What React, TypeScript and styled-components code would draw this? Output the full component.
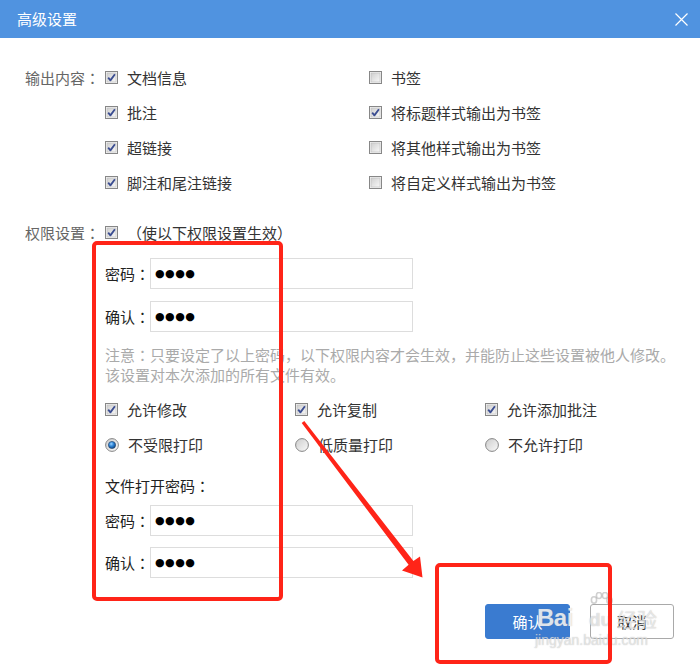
import styled, { createGlobalStyle } from 'styled-components';

const GlobalStyle = createGlobalStyle`
  html, body {
    margin: 0;
    padding: 0;
    background: #ffffff;
  }
  body {
    font-family: "Noto Sans CJK SC", "Noto Sans", sans-serif;
  }
`;

const Page = styled.div`
  position: relative;
  width: 700px;
  height: 666px;
  overflow: hidden;
  background: #ffffff;
  font-size: 15px;
  color: #333333;
`;

const Header = styled.div`
  height: 38px;
  background: #5093e0;
  display: flex;
  align-items: center;
  justify-content: space-between;
  padding: 0 12px 0 17px;
  box-sizing: border-box;
`;

const Title = styled.div`
  color: #ffffff;
  font-size: 15px;
  line-height: 20px;
`;

const CloseButton = styled.button`
  border: none;
  background: transparent;
  padding: 0;
  width: 13px;
  height: 13px;
  display: flex;
  cursor: pointer;
`;

const Body = styled.div`
  padding: 22px 0 0 25px;
`;

const Colon = styled.span`
  font-family: "Noto Sans CJK TC", "Noto Sans CJK SC", sans-serif;
`;

const OutputGrid = styled.div`
  display: grid;
  grid-template-columns: 80px 264px 1fr;
  grid-auto-rows: 35px;
  align-items: center;
`;

const SectionLabel = styled.div`
  color: #666666;
  line-height: 20px;
  white-space: nowrap;
`;

const Option = styled.label`
  display: flex;
  align-items: center;
  gap: 9px;
  line-height: 20px;
  white-space: nowrap;
  color: #333333;
`;

const PermRow = styled.div`
  margin-top: 15px;
  height: 35px;
  display: flex;
  align-items: center;
  & > ${SectionLabel} {
    width: 80px;
  }
`;

const PermBody = styled.div`
  padding-left: 80px;
  margin-top: 8px;
`;

const FieldRow = styled.div<{ $gap?: number }>`
  display: flex;
  align-items: center;
  height: 31px;
  margin-top: ${p => p.$gap ?? 0}px;
`;

const FieldLabel = styled.span`
  width: 45px;
  color: #222222;
  line-height: 20px;
  white-space: nowrap;
`;

const PwdInput = styled.input`
  width: 263px;
  height: 31px;
  box-sizing: border-box;
  border: 1px solid #dddddd;
  padding: 0 0 0 4px;
  font-family: "DejaVu Sans", sans-serif;
  font-size: 11px;
  letter-spacing: 0.5px;
  color: #000000;
  outline: none;
  background: #ffffff;
`;

const Note = styled.div`
  margin-top: 13px;
  color: #aaaaaa;
  line-height: 20px;
  white-space: nowrap;
`;

const OptionsGrid = styled.div`
  margin-top: 7px;
  display: grid;
  grid-template-columns: 190px 190px 1fr;
  grid-auto-rows: 35px;
  align-items: center;
`;

const SubTitle = styled.div`
  margin-top: 14px;
  line-height: 20px;
  color: #222222;
`;

const Footer = styled.div`
  margin-top: 26px;
  display: flex;
  justify-content: flex-end;
  gap: 20px;
  padding-right: 26px;
`;

const DialogButton = styled.button<{ $primary?: boolean }>`
  width: ${p => (p.$primary ? 85 : 84)}px;
  height: 35px;
  border-radius: 3px;
  font-family: inherit;
  font-size: 15px;
  cursor: pointer;
  border: 1px solid ${p => (p.$primary ? '#3a7bd0' : '#a9a9a9')};
  background: ${p => (p.$primary ? '#3a7bd0' : '#ffffff')};
  color: ${p => (p.$primary ? '#ffffff' : '#333333')};
`;

const Annotation = styled.svg`
  position: absolute;
  left: 0;
  top: 0;
  pointer-events: none;
`;

const RedBox = styled.div<{ $x: number; $y: number; $w: number; $h: number }>`
  position: absolute;
  left: ${p => p.$x}px;
  top: ${p => p.$y}px;
  width: ${p => p.$w}px;
  height: ${p => p.$h}px;
  box-sizing: border-box;
  border: 4px solid #ff2418;
  border-radius: 5px;
  pointer-events: none;
`;

const Watermark = styled.div`
  position: absolute;
  left: 535px;
  top: 592px;
  width: 130px;
  height: 60px;
  pointer-events: none;
  font-family: "Liberation Sans", Arial, sans-serif;
`;

const WmBai = styled.span`
  position: absolute;
  left: 2px;
  top: 12px;
  font-size: 24px;
  font-weight: bold;
  letter-spacing: -0.5px;
  color: rgba(255, 255, 255, 0.78);
  text-shadow: 0 0 1px rgba(140, 140, 140, 0.6);
`;

const WmDu = styled.span`
  position: absolute;
  left: 54px;
  top: 17px;
  font-size: 19px;
  font-weight: bold;
  color: rgba(255, 255, 255, 0.6);
  text-shadow: 0 0 1px rgba(150, 150, 150, 0.7);
`;

const WmJingyan = styled.span`
  position: absolute;
  left: 82px;
  top: 18px;
  font-size: 20px;
  font-family: "Noto Sans CJK SC", sans-serif;
  color: rgba(255, 255, 255, 0.6);
  text-shadow: 0 0 1px rgba(150, 150, 150, 0.7);
  line-height: 20px;
`;

const WmUrl = styled.span`
  position: absolute;
  left: 0;
  top: 40px;
  font-size: 14px;
  color: rgba(255, 255, 255, 0.55);
  text-shadow: 0 0 1px rgba(150, 150, 150, 0.7);
`;

const WmPaw = styled.svg`
  position: absolute;
  left: 53px;
  top: 0;
`;

const Checkbox = ({ checked }: { checked?: boolean }) => (
  <svg width="13" height="13" viewBox="0 0 13 13" style={{ flex: 'none' }}>
    <defs>
      <linearGradient id="cbFill" x1="0" y1="0" x2="1" y2="1">
        <stop offset="0" stopColor="#cfcfcf" />
        <stop offset="1" stopColor="#f8f8f8" />
      </linearGradient>
    </defs>
    <rect x="0.5" y="0.5" width="12" height="12" fill="#f4f4f4" stroke="#878787" />
    <rect x="2" y="2" width="9" height="9" fill="url(#cbFill)" stroke="#bdbdbd" strokeWidth="0.6" />
    {checked && (
      <path d="M3.2 6.6 L5.4 9.4 L9.9 3.2" fill="none" stroke="#3b4d91" strokeWidth="1.8" strokeLinejoin="round" />
    )}
  </svg>
);

const Radio = ({ checked }: { checked?: boolean }) => (
  <svg width="14" height="14" viewBox="0 0 14 14" style={{ flex: 'none' }}>
    <defs>
      <linearGradient id="rdBg" x1="0" y1="0" x2="1" y2="1">
        <stop offset="0" stopColor="#cccccc" />
        <stop offset="1" stopColor="#fafafa" />
      </linearGradient>
      <radialGradient id="rdDot" cx="0.4" cy="0.35" r="0.7">
        <stop offset="0" stopColor="#9ad2ff" />
        <stop offset="0.45" stopColor="#2f86d8" />
        <stop offset="1" stopColor="#0b3f7a" />
      </radialGradient>
    </defs>
    <circle cx="7" cy="7" r="6.4" fill="url(#rdBg)" stroke="#878787" strokeWidth="1" />
    {checked && <circle cx="7" cy="7" r="3.6" fill="url(#rdDot)" stroke="#1d3d66" strokeWidth="0.6" />}
  </svg>
);

type Item = { text: string; checked?: boolean };

const outputLeft: Item[] = [
  { text: '文档信息', checked: true },
  { text: '批注', checked: true },
  { text: '超链接', checked: true },
  { text: '脚注和尾注链接', checked: true },
];

const outputRight: Item[] = [
  { text: '书签' },
  { text: '将标题样式输出为书签', checked: true },
  { text: '将其他样式输出为书签' },
  { text: '将自定义样式输出为书签' },
];

const allowItems: Item[] = [
  { text: '允许修改', checked: true },
  { text: '允许复制', checked: true },
  { text: '允许添加批注', checked: true },
];

const printItems: Item[] = [
  { text: '不受限打印', checked: true },
  { text: '低质量打印' },
  { text: '不允许打印' },
];

const Password = ({ label, gap }: { label: string; gap?: number }) => (
  <FieldRow $gap={gap}>
    <FieldLabel>
      {label}
      <Colon>：</Colon>
    </FieldLabel>
    <PwdInput readOnly value="●●●●" />
  </FieldRow>
);

export default function App() {
  return (
    <Page>
      <GlobalStyle />
      <Header>
        <Title>高级设置</Title>
        <CloseButton aria-label="关闭">
          <svg width="13" height="13" viewBox="0 0 13 13">
            <path d="M0.5 0.5 L12.5 12.5 M12.5 0.5 L0.5 12.5" stroke="#ffffff" strokeWidth="1.2" />
          </svg>
        </CloseButton>
      </Header>

      <Body>
        <OutputGrid>
          {outputLeft.map((item, i) => [
            i === 0 ? (
              <SectionLabel key={`l${i}`}>
                输出内容<Colon>：</Colon>
              </SectionLabel>
            ) : (
              <span key={`l${i}`} />
            ),
            <Option key={`a${i}`}>
              <Checkbox checked={item.checked} />
              {item.text}
            </Option>,
            <Option key={`b${i}`}>
              <Checkbox checked={outputRight[i].checked} />
              {outputRight[i].text}
            </Option>,
          ])}
        </OutputGrid>

        <PermRow>
          <SectionLabel>
            权限设置<Colon>：</Colon>
          </SectionLabel>
          <Option>
            <Checkbox checked />
            （使以下权限设置生效）
          </Option>
        </PermRow>

        <PermBody>
          <Password label="密码" />
          <Password label="确认" gap={12} />

          <Note>
            注意<Colon>：</Colon>只要设定了以上密码，以下权限内容才会生效，并能防止这些设置被他人修改。
            <br />
            该设置对本次添加的所有文件有效。
          </Note>

          <OptionsGrid>
            {allowItems.map(item => (
              <Option key={item.text}>
                <Checkbox checked={item.checked} />
                {item.text}
              </Option>
            ))}
            {printItems.map(item => (
              <Option key={item.text}>
                <Radio checked={item.checked} />
                {item.text}
              </Option>
            ))}
          </OptionsGrid>

          <SubTitle>
            文件打开密码<Colon>：</Colon>
          </SubTitle>
          <Password label="密码" gap={9} />
          <Password label="确认" gap={11} />
        </PermBody>

        <Footer>
          <DialogButton $primary>确认</DialogButton>
          <DialogButton>取消</DialogButton>
        </Footer>
      </Body>

      <Watermark>
        <WmPaw width="26" height="22" viewBox="0 0 26 22">
          <g fill="none" stroke="rgba(170,170,170,0.55)" strokeWidth="1.6">
            <ellipse cx="6" cy="8" rx="2.6" ry="3.2" />
            <ellipse cx="11" cy="3.5" rx="2.6" ry="3" />
            <ellipse cx="17" cy="3.5" rx="2.6" ry="3" />
            <ellipse cx="21.5" cy="8.5" rx="2.6" ry="3.2" />
          </g>
        </WmPaw>
        <WmBai>Bai</WmBai>
        <WmDu>du</WmDu>
        <WmJingyan>经验</WmJingyan>
        <WmUrl>jingyan.baidu.com</WmUrl>
      </Watermark>

      <RedBox $x={92} $y={241} $w={191} $h={360} />
      <RedBox $x={435} $y={563} $w={177} $h={101} />
      <Annotation width="700" height="666" viewBox="0 0 700 666">
        <polygon
          points="304.3,421 413.4,561 420,556.5 422.5,577.5 402,570.5 408.6,564.8 301.7,423"
          fill="#ff2418"
        />
      </Annotation>
    </Page>
  );
}
